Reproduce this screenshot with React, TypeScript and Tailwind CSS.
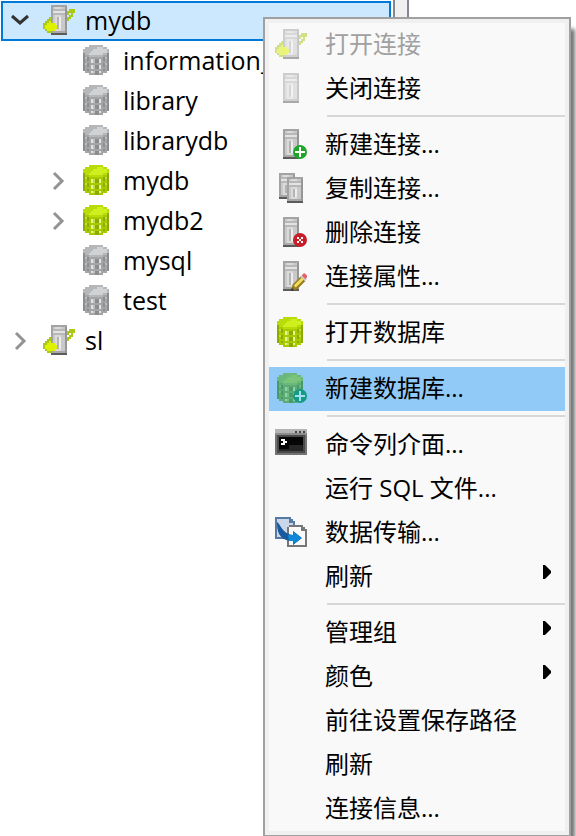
import React, { useState } from "react";

type IconName =
  | "link"
  | "server"
  | "serverAdd"
  | "serverCopy"
  | "serverDelete"
  | "serverEdit"
  | "db"
  | "dbOpen"
  | "dbAdd"
  | "console"
  | "transfer";

interface TreeNode {
  id: string;
  label: string;
  icon: IconName;
  level: 0 | 1;
  state?: "open" | "closed";
}

interface MenuEntry {
  id: string;
  label: string;
  icon?: IconName;
  disabled?: boolean;
  faded?: boolean;
  submenu?: boolean;
}

const nodes: TreeNode[] = [
  { id: "conn-mydb", label: "mydb", icon: "link", level: 0, state: "open" },
  { id: "information", label: "information_", icon: "db", level: 1 },
  { id: "library", label: "library", icon: "db", level: 1 },
  { id: "librarydb", label: "librarydb", icon: "db", level: 1 },
  { id: "mydb", label: "mydb", icon: "dbOpen", level: 1, state: "closed" },
  { id: "mydb2", label: "mydb2", icon: "dbOpen", level: 1, state: "closed" },
  { id: "mysql", label: "mysql", icon: "db", level: 1 },
  { id: "test", label: "test", icon: "db", level: 1 },
  { id: "conn-sl", label: "sl", icon: "link", level: 0, state: "closed" },
];

const groups: MenuEntry[][] = [
  [
    { id: "open", label: "打开连接", icon: "link", disabled: true, faded: true },
    { id: "close", label: "关闭连接", icon: "server", faded: true },
  ],
  [
    { id: "new", label: "新建连接...", icon: "serverAdd" },
    { id: "copy", label: "复制连接...", icon: "serverCopy" },
    { id: "delete", label: "删除连接", icon: "serverDelete" },
    { id: "props", label: "连接属性...", icon: "serverEdit" },
  ],
  [{ id: "open-db", label: "打开数据库", icon: "dbOpen" }],
  [{ id: "new-db", label: "新建数据库...", icon: "dbAdd" }],
  [
    { id: "cli", label: "命令列介面...", icon: "console" },
    { id: "run-sql", label: "运行 SQL 文件..." },
    { id: "transfer", label: "数据传输...", icon: "transfer" },
    { id: "refresh-sub", label: "刷新", submenu: true },
  ],
  [
    { id: "group", label: "管理组", submenu: true },
    { id: "color", label: "颜色", submenu: true },
    { id: "path", label: "前往设置保存路径" },
    { id: "refresh", label: "刷新" },
    { id: "info", label: "连接信息..." },
  ],
];

const Tower = ({ x = 4, y = 0, h = 15 }: { x?: number; y?: number; h?: number }) => (
  <g transform={`translate(${x} ${y})`}>
    <rect width="8" height={h} fill="#a3a3a3" />
    <rect x="1" y="1" width="6" height={h - 2} fill="#c9c9c9" />
    <rect x="2" y="1" width="3" height={h - 2} fill="#dadada" />
    <rect x="1" y="2" width="6" height="1" fill="#b8b8b8" />
    <rect x="1" y="3" width="6" height="1" fill="#e3e3e3" />
    <rect x="1" y="4" width="6" height="1" fill="#b8b8b8" />
    <rect x="3" y="6" width="1" height={h - 9} fill="#b4b4b4" />
    <rect x="4" y="6" width="1" height={h - 9} fill="#ededed" />
    <rect x="7" y="1" width="1" height={h - 1} fill="#969696" />
    <rect y={h - 1} width="8" height="1" fill="#5b5b5b" />
    <rect x="1" y={h - 2} width="6" height="1" fill="#a8a8a8" />
  </g>
);

interface Palette {
  edge: string;
  body: string;
  light: string;
  top: string;
  topDark: string;
}

const gray: Palette = { edge: "#8b8d8f", body: "#a3a5a7", light: "#e0e1e2", top: "#d0d2d3", topDark: "#b5b8ba" };
const lime: Palette = { edge: "#8cab00", body: "#a8ca00", light: "#e6f58c", top: "#cff01e", topDark: "#b8dc08" };
const teal: Palette = { edge: "#479a6a", body: "#5bab72", light: "#8fd0a8", top: "#7ac47c", topDark: "#6ab97b" };

const Cylinder = ({ c }: { c: Palette }) => (
  <g>
    <path d="M1 2h13v11h-1v1h-2v1H4v-1H2v-1H1z" fill={c.body} />
    <path d="M1 3h1v10H1zM13 3h1v10h-1z" fill={c.edge} />
    {/* stripes between the rings */}
    <path d="M7 7h2v2H7zM7 10h2v2H7zM7 13h2v2H7zM3 6h1v2H3zM3 9h1v2H3zM3 12h1v1H3zM11 6h1v2h-1zM11 9h1v2h-1zM11 12h1v1h-1z" fill={c.edge} />
    <path d="M5 7h1v2H5zM5 10h1v2H5zM5 13h1v1H5zM9 7h1v2H9zM9 10h1v2H9zM9 13h1v1H9z" fill={c.light} />
    <path d="M6 7h1v2H6zM6 10h1v2H6zM6 13h1v1H6zM2 6h1v1H2zM2 9h1v1H2zM12 6h1v1h-1zM12 9h1v1h-1z" fill={c.light} opacity="0.45" />
    <path d="M4 0h7v1h2v1h1v2h-1v1h-2v1H4V5H2V4H1V2h1V1h2z" fill={c.topDark} />
    <path d="M8 1h3v1h2v2h-2v1H4V4h1V3h1V2h2z" fill={c.top} />
  </g>
);

const Badge = ({ color, mark = "#fff", kind }: { color: string; mark?: string; kind: "plus" | "cross" }) => (
  <g>
    <circle cx="12.5" cy="11.5" r="3.5" fill={color} shapeRendering="auto" />
    {kind === "plus" ? (
      <path d="M12 9h1v2h2v1h-2v2h-1v-2h-2v-1h2z" fill={mark} />
    ) : (
      <path d="M11 10h1v1h-1zM13 10h1v1h-1zM12 11h1v1h-1zM11 12h1v1h-1zM13 12h1v1h-1z" fill={mark} />
    )}
  </g>
);

const drawings: Record<IconName, React.ReactNode> = {
  link: (
    <>
      <path d="M11 3h2V2h3v2h-1v2h-1v1h-1v1h-2V7h1V6h1V5h1V4h-1v1h-2z" fill="#a9c916" />
      <path d="M3 6h2v8H2v-1H1v-1H0V9h1V8h1V7h1z" fill="#a9c916" />
      <path d="M3 8h1v1h2v4H2v-1H1v-2h1V9h1z" fill="#dcf000" />
      <Tower />
      <path d="M4 9h2v1h1v2H6v1H4z" fill="#dcf000" />
    </>
  ),
  server: <Tower />,
  serverAdd: (
    <>
      <Tower />
      <Badge color="#20a52b" kind="plus" />
    </>
  ),
  serverCopy: (
    <>
      <Tower x={2} h={13} />
      <Tower x={6} y={2} h={13} />
    </>
  ),
  serverDelete: (
    <>
      <Tower />
      <Badge color="#c81e28" kind="cross" />
    </>
  ),
  serverEdit: (
    <>
      <Tower />
      <g shapeRendering="auto">
        <path d="M8 15l.8-3.2 4-4 2.3 2.3-4 4z" fill="#9a7e22" />
        <path d="M9.4 12.2l4-4 1 1-4 4z" fill="#f2df62" />
        <path d="M12.8 7.8l.9-.9 2.2 2.2-.8 1z" fill="#c9c9c9" />
        <path d="M13.4 7.1l1.2-1.1 1.4 1.3v1l-.9.7z" fill="#e5606d" />
        <path d="M8 15l.4-1.6 1.2 1.2z" fill="#333" />
      </g>
    </>
  ),
  db: <Cylinder c={gray} />,
  dbOpen: <Cylinder c={lime} />,
  dbAdd: (
    <>
      <Cylinder c={teal} />
      <Badge color="#169b83" mark="#a5dcef" kind="plus" />
    </>
  ),
  console: (
    <>
      <rect width="16" height="13" fill="#747474" />
      <rect width="16" height="2" fill="#b4b4b4" />
      <rect y="2" width="16" height="1" fill="#8c8c8c" />
      <path d="M10 1h1v1h-1zM12 1h1v1h-1zM14 1h1v1h-1z" fill="#444" />
      <rect x="1" y="3" width="14" height="9" fill="#4a4a4a" />
      <rect x="2" y="4" width="12" height="7" fill="#060606" />
      <path d="M7 8h7v3H2v-1h5z" fill="#262626" />
      <path d="M3 5h2v1h1v1H5v1H3V7h1V6H3z" fill="#fff" />
    </>
  ),
  transfer: (
    <>
      <path d="M0 0h8v1h1v1h1v9H0z" fill="#577aa5" />
      <path d="M1 1h6v2h2v7H1z" fill="#cbd7e8" />
      <path d="M7 4h7v1h1v1h1v9H6V5h1z" fill="#777" />
      <path d="M7 5h6v2h2v7H7z" fill="#fafafa" />
      <g shapeRendering="auto">
        <path d="M1 2.5C2.5 3 3.5 8.5 9 9V7l4.5 3.5L9 14v-2C4 12 .8 9.5 1 2.5z" fill="#175a9e" />
        <path d="M6.5 9h2.7V7.3l4 3.2-4 3.2V12H7z" fill="#0f88d8" />
      </g>
    </>
  ),
};

const Icon = ({ name, faded }: { name: IconName; faded?: boolean }) => (
  <svg
    viewBox="0 0 16 16"
    shapeRendering="crispEdges"
    aria-hidden="true"
    className={`h-8 w-8 shrink-0 ${faded ? "opacity-50" : ""}`}
  >
    {drawings[name]}
  </svg>
);

const Chevron = ({ state }: { state?: "open" | "closed" }) => (
  <svg viewBox="0 0 20 20" aria-hidden="true" className="h-5 w-5 shrink-0" fill="none">
    {state === "open" && <path d="M1 5l8 7 8-7" stroke="#333" strokeWidth="3" />}
    {state === "closed" && <path d="M5 2l8 8-8 8" stroke="#939393" strokeWidth="3" />}
  </svg>
);

const App: React.FC = () => {
  const [selected, setSelected] = useState("conn-mydb");
  const [active, setActive] = useState("new-db");

  return (
    <div className="relative flex h-screen overflow-hidden bg-white font-['Open_Sans','Noto_Sans_CJK_SC',sans-serif] text-2xl text-black">
      <nav className="w-[393px] shrink-0 pt-px pr-0.5 pl-px text-[25px]">
        {nodes.map((node) => (
          <button
            key={node.id}
            type="button"
            onClick={() => setSelected(node.id)}
            className={`flex h-10 w-full items-center border-2 text-left leading-8 whitespace-nowrap ${
              node.level === 0 ? "pl-2" : "pl-[46px]"
            } ${
              selected === node.id
                ? "border-[#0078d7] bg-[#cce8ff]"
                : "border-transparent"
            }`}
          >
            <Chevron state={node.state} />
            <span className="ml-3 flex items-center gap-2.5">
              <Icon name={node.icon} />
              <span className="pb-0.5">{node.label}</span>
            </span>
          </button>
        ))}
      </nav>
      <div className="w-4 shrink-0 border-x-2 border-[#828790] bg-[#f0f0f0]" />

      <div
        role="menu"
        className="absolute top-[17px] left-[263px] w-[308px] border-2 border-[#a0a0a0] bg-[#f0f0f0] p-1 shadow-[4px_12px_4px_rgba(0,0,0,0.55)]"
      >
        {groups.map((group, i) => (
          <div key={i} role="group" className="bg-[#f9f9f9]">
            {i > 0 && (
              <div className="h-3 pt-1 pl-[58px]">
                <div className="h-0.5 bg-[#d7d7d7]" />
              </div>
            )}
            {group.map((item) => (
              <button
                key={item.id}
                type="button"
                role="menuitem"
                disabled={item.disabled}
                onMouseEnter={() => setActive(item.id)}
                className={`flex h-11 w-full items-center pr-3.5 pl-1.5 text-left whitespace-nowrap ${
                  active === item.id ? "bg-[#91c9f7]" : ""
                } ${item.disabled ? "text-[#a0a0a0]" : ""}`}
              >
                <span className="w-[50px] shrink-0">
                  {item.icon && <Icon name={item.icon} faded={item.faded} />}
                </span>
                <span className="flex-1 pb-0.5">{item.label}</span>
                {item.submenu && (
                  <svg
                    viewBox="0 0 8 14"
                    aria-hidden="true"
                    className="mt-2.5 h-3.5 w-2 shrink-0 self-start"
                  >
                    <path d="M0 0h2l6 6v2l-6 6H0z" fill="#000" />
                  </svg>
                )}
              </button>
            ))}
          </div>
        ))}
      </div>
    </div>
  );
};

export default App;
